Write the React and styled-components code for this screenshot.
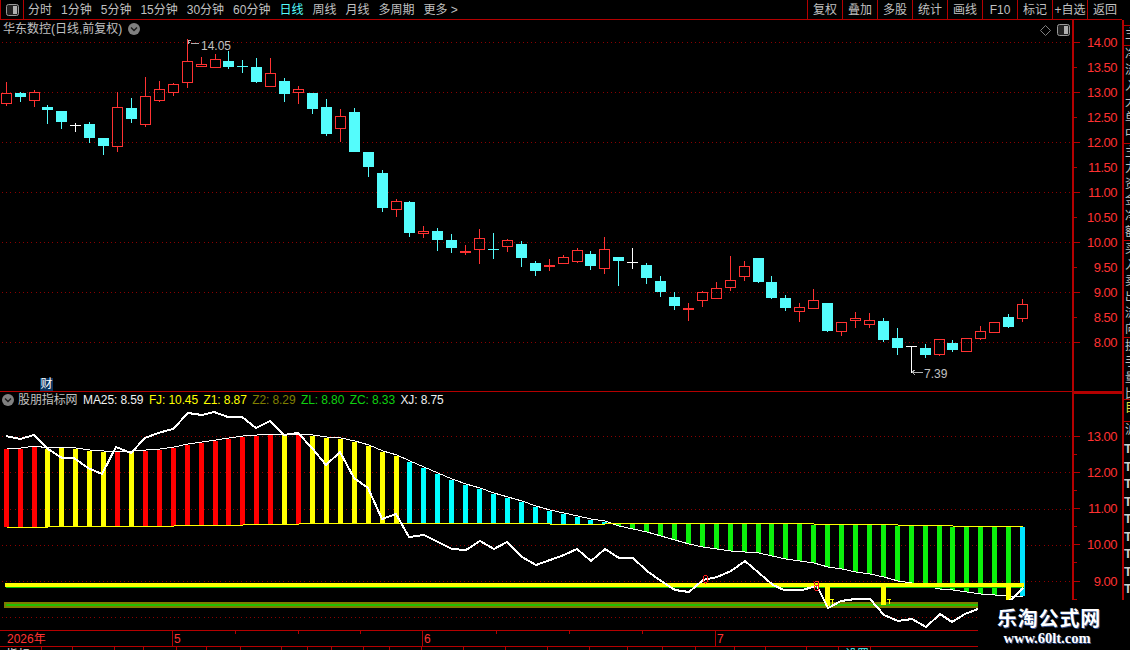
import React from 'react';
import styled, { createGlobalStyle } from 'styled-components';

const RED_LINE = '#b40000';
const RED_TEXT = '#ff3232';
const GREY_TEXT = '#c0c0c0';
const CJK = '"Liberation Sans", "Noto Sans CJK SC", sans-serif';

const GlobalStyle = createGlobalStyle`
  html, body {
    margin: 0;
    background: #000;
  }
`;

const Page = styled.div`
  position: relative;
  width: 1130px;
  height: 650px;
  overflow: hidden;
  background: #000;
  color: ${GREY_TEXT};
  font-family: ${CJK};
  font-size: 12px;
`;

// top toolbar
const TopBar = styled.div`
  display: flex;
  align-items: center;
  height: 19px;
  width: 1122px;
  line-height: 14px;
  border-bottom: 1px solid ${RED_LINE};
`;

const IconBox = styled.div`
  display: flex;
  align-items: center;
  justify-content: center;
  box-sizing: border-box;
  width: 24px;
  height: 19px;
  margin-right: 4px;
  border-left: 1px solid ${RED_LINE};
  border-right: 1px solid ${RED_LINE};
`;

const Periods = styled.div`
  display: flex;
  gap: 9px;
  flex: 1;
`;

const Period = styled.span`
  white-space: nowrap;
  color: ${p => (p.$active ? '#54fcfc' : GREY_TEXT)};
`;

const ToolButton = styled.div`
  display: flex;
  align-items: center;
  justify-content: center;
  box-sizing: border-box;
  width: 35px;
  height: 19px;
  border-left: 1px solid ${RED_LINE};
  white-space: nowrap;
`;

const Workspace = styled.div`
  display: flex;
  height: 630px;
`;

const ChartStack = styled.div`
  display: flex;
  flex-direction: column;
  width: 1122px;
`;

const Pane = styled.div`
  display: flex;
  box-sizing: border-box;
  height: ${p => p.$h}px;
  border-top: ${p => (p.$lower ? `1px solid ${RED_LINE}` : 'none')};
`;

const Plot = styled.div`
  position: relative;
  width: 1072px;
  flex: none;

  svg {
    display: block;
  }
`;

const PaneHeader = styled.div`
  position: absolute;
  top: ${p => p.$top}px;
  left: ${p => p.$left}px;
  display: flex;
  align-items: center;
  gap: ${p => p.$gap}px;
  line-height: 14px;
  white-space: nowrap;
`;

const Legend = styled.span`
  color: ${p => p.$color};
  letter-spacing: -0.1px;
  margin-right: ${p => p.$mr || 0}px;
`;

const CornerIcons = styled.div`
  position: absolute;
  top: 4px;
  right: 2px;
  display: flex;
  align-items: center;
  gap: 6px;
`;

const FinanceBadge = styled.div`
  position: absolute;
  left: 40px;
  bottom: 0;
  width: 13px;
  height: 13px;
  background: #0a3560;
  color: #fff;
  line-height: 13px;
  text-align: center;
`;

const Axis = styled.div`
  box-sizing: border-box;
  width: 50px;
  padding-top: ${p => p.$pad}px;
  border-left: 2px solid ${RED_LINE};
  border-top: ${p => (p.$boxed ? `2px solid ${RED_LINE}` : 'none')};
`;

const AxisRow = styled.div`
  display: flex;
  align-items: center;
  justify-content: space-between;
  height: ${p => p.$h}px;
  padding-right: 5px;
  color: ${RED_TEXT};
  font-size: 13px;
  letter-spacing: -0.5px;
`;

const Tick = styled.i`
  display: block;
  width: ${p => (p.$major ? 6 : 3)}px;
  height: 1px;
  background: ${RED_LINE};
`;

// date axis under the charts
const TimeAxis = styled.div`
  display: flex;
  box-sizing: border-box;
  height: 17px;
  border-top: 1px solid ${RED_LINE};
  border-bottom: 1px solid ${RED_LINE};
  color: ${RED_TEXT};
`;

const MonthCell = styled.div`
  display: flex;
  box-sizing: border-box;
  width: ${p => p.$w}px;
  flex: none;
  line-height: 16px;
  border-left: ${p => (p.$first ? 'none' : `1px solid ${RED_LINE}`)};
  padding-left: ${p => (p.$first ? 7 : 1)}px;
`;

const WeekSlot = styled.div`
  box-sizing: border-box;
  flex: 1;
  height: 3px;
  border-right: ${p => (p.$last ? 'none' : `1px solid ${RED_LINE}`)};
`;

const MonthLabel = styled.span`
  position: absolute;
`;

const BottomTabs = styled.div`
  display: flex;
  height: 3px;
  overflow: hidden;
`;

const BottomTab = styled.div`
  box-sizing: border-box;
  width: ${p => p.$w}px;
  flex: none;
  height: 3px;
  border-right: 1px solid ${RED_LINE};
  padding-left: ${p => p.$pad || 0}px;
  color: ${p => p.$color || '#e0e0e0'};
  line-height: 16px;
  white-space: nowrap;
`;

// clipped side panel along the right edge
const SideStrip = styled.div`
  display: flex;
  flex-direction: column;
  box-sizing: border-box;
  width: 8px;
  height: 580px;
  padding-top: 5px;
  border-left: 2px solid ${RED_LINE};
`;

const StripCell = styled.div`
  box-sizing: border-box;
  height: ${p => p.$h}px;
  width: 6px;
  overflow: hidden;
  border-top: 1px solid ${RED_LINE};
  color: ${p => p.$color || GREY_TEXT};
  line-height: 16px;
  word-break: break-all;
  padding-left: 1px;
`;

const StripMark = styled.div`
  height: 17.5px;
  width: 6px;
  overflow: hidden;
  font-weight: bold;
  font-size: 13px;
  line-height: 17px;
  color: #ccc;
`;

const Watermark = styled.div`
  position: absolute;
  left: 978px;
  top: 600px;
  width: 152px;
  height: 50px;
  background: #000;
  color: #fff;
  text-align: center;
`;

const WatermarkTitle = styled.div`
  margin-top: 5px;
  padding-right: 10px;
  font-family: "Noto Sans CJK SC", sans-serif;
  font-size: 20px;
  line-height: 26px;
  font-weight: 700;
  letter-spacing: 0.8px;
  text-shadow: 1px 1px 0 #36508c;
`;

const WatermarkUrl = styled.div`
  padding-right: 14px;
  font-family: "Liberation Serif", serif;
  font-size: 14.5px;
  line-height: 14px;
  font-weight: 700;
  text-shadow: 1px 1px 0 #36508c;
`;

const LEFT_PERIODS = ['分时', '1分钟', '5分钟', '15分钟', '30分钟', '60分钟', '日线', '周线', '月线', '多周期', '更多 >'];
const TOOLS = ['复权', '叠加', '多股', '统计', '画线', 'F10', '标记', '+自选', '返回'];

// x, kind, high, body top, body bottom, low
const CANDLES = [
  [6, 'r', 82, 93, 104, 106], [20, 'c', 92, 93, 97, 102], [34, 'r', 90, 92, 101, 107],
  [47, 'c', 105, 107, 110, 124], [61, 'c', 111, 111, 122, 129], [75, 'w', 123, 125, 126, 132],
  [89, 'c', 122, 124, 138, 143], [103, 'c', 138, 138, 146, 155], [117, 'r', 92, 107, 147, 152],
  [131, 'c', 98, 108, 119, 123], [145, 'r', 77, 96, 125, 127], [159, 'r', 81, 89, 101, 102],
  [173, 'r', 83, 84, 93, 96], [187, 'r', 39, 61, 83, 88], [201, 'r', 57, 64, 67, 67],
  [215, 'r', 54, 59, 68, 68], [228, 'c', 51, 61, 67, 69], [242, 'c', 60, 66, 67, 73],
  [256, 'c', 58, 67, 82, 83], [270, 'r', 58, 73, 87, 87], [284, 'c', 78, 81, 94, 102],
  [298, 'r', 86, 89, 93, 104], [312, 'c', 93, 93, 109, 114], [326, 'c', 99, 107, 134, 136],
  [340, 'r', 109, 116, 129, 142], [354, 'c', 108, 112, 152, 152], [368, 'c', 152, 152, 167, 177],
  [382, 'c', 170, 173, 208, 212], [396, 'r', 199, 201, 210, 217], [409, 'c', 201, 202, 233, 237],
  [423, 'r', 226, 231, 234, 238], [437, 'c', 228, 231, 240, 251], [451, 'c', 234, 240, 248, 253],
  [465, 'r', 245, 251, 253, 255], [479, 'r', 229, 238, 250, 264], [493, 'c', 233, 249, 250, 259],
  [507, 'r', 239, 240, 247, 252], [521, 'c', 241, 244, 258, 267], [535, 'c', 261, 263, 271, 276],
  [549, 'r', 259, 265, 267, 271], [563, 'r', 255, 257, 264, 264], [577, 'r', 248, 250, 262, 263],
  [590, 'c', 251, 254, 266, 270], [604, 'r', 237, 249, 269, 274], [618, 'c', 257, 257, 261, 286],
  [632, 'w', 248, 262, 263, 269], [646, 'c', 263, 265, 278, 284], [660, 'c', 276, 281, 292, 297],
  [674, 'c', 292, 297, 306, 310], [688, 'r', 303, 308, 310, 321], [702, 'r', 291, 292, 301, 307],
  [716, 'r', 282, 288, 299, 299], [730, 'r', 256, 280, 288, 291], [744, 'r', 261, 266, 277, 281],
  [758, 'c', 258, 258, 282, 283], [771, 'c', 276, 282, 298, 299], [785, 'c', 295, 298, 308, 311],
  [799, 'r', 303, 307, 312, 322], [813, 'r', 289, 300, 309, 309], [827, 'c', 303, 303, 331, 332],
  [841, 'r', 322, 322, 332, 336], [855, 'r', 312, 318, 321, 328], [869, 'r', 313, 320, 325, 328],
  [883, 'c', 318, 321, 340, 342], [897, 'c', 328, 338, 348, 355], [911, 'w', 346, 346, 347, 373],
  [925, 'c', 344, 348, 355, 358], [939, 'r', 339, 339, 355, 356], [952, 'c', 340, 343, 350, 352],
  [966, 'r', 338, 338, 352, 352], [980, 'r', 326, 331, 339, 340], [994, 'r', 322, 322, 333, 333],
  [1008, 'c', 314, 317, 327, 328], [1022, 'r', 299, 304, 319, 322],
];

const FALL_TOPS = [449, 449, 447, 449, 448, 449, 451, 452, 452, 452, 451, 450, 448, 445, 443, 441, 439, 437, 436, 435, 435, 435, 436, 438, 439, 442, 446, 452, 456, 462, 468, 474, 480, 485, 489, 494, 498, 502, 507, 511, 514, 517, 520, 522];
const GREEN_BOTTOMS = [526, 529, 532, 536, 540, 544, 547, 549, 551, 552, 553, 556, 559, 561, 563, 567, 569, 572, 574, 577, 581, 583, 586, 589, 590, 592, 594, 595, 596, 596];

const barColor = i => {
  if (i >= 73) return '#00e4ff';
  if (i >= 44) return '#0cf00c';
  if (i >= 29) return '#00ffff';
  const red = i < 3 || i === 8 || (i >= 10 && i < 20) || i === 21;
  return red ? '#ff0000' : '#ffff00';
};
const lowerEdge = x => (x < 50 ? 527 : x < 180 ? 526 : x < 250 ? 525 : x < 300 ? 524 : x < 543 ? 523 : 524);
const upperEdge = x => (x < 808 ? 524 : x < 890 ? 525 : x < 945 ? 526 : 527);

const BARS = CANDLES.map(([x], i) => (i < 44
  ? { x, top: FALL_TOPS[i], bottom: lowerEdge(x), color: barColor(i) }
  : { x, top: upperEdge(x), bottom: GREEN_BOTTOMS[i - 44], color: barColor(i) }));

const XJ_LINE = '6,436 20,439 34,435 48,449 62,458 74,458 88,468 102,474 116,447 131,453 145,438 158,433 173,429 188,413 202,415 214,412 228,417 242,417 256,428 270,421 284,435 298,433 312,448 326,465 340,452 354,478 368,488 382,519 396,514 409,537 424,535 438,542 452,549 466,550 480,541 494,549 507,542 522,557 536,565 550,560 564,555 577,549 591,561 605,549 619,558 633,558 647,571 661,581 675,590 689,592 703,580 717,577 731,571 745,561 759,573 773,585 784,590 802,590 817,586 828,608 841,601 855,599 870,599 884,615 898,621 912,619 926,627 940,614 952,622 965,614 978,609 995,605 1011,600 1023,588';

const WHITE_EDGE = BARS.map((b, i) => `${b.x + 1},${i < 44 ? b.top - 1 : b.bottom}`).join(' ');
const YELLOW_EDGE = BARS.map((b, i) => `${b.x + 1},${i < 44 ? b.bottom : b.top - 1}`).join(' ');

const MAIN_GRID = [42, 92, 142, 192, 242, 292, 342];
const LOWER_GRID = [436, 472, 509, 545, 581, 617];

const CANDLE_COLORS = { r: '#ff3232', c: '#54fcfc', w: '#ffffff' };

const Candle = ({ x, kind, high, top, bottom, low }) => {
  const color = CANDLE_COLORS[kind];
  if (bottom - top <= 1) {
    return (
      <g fill={color}>
        <rect x={x} y={high} width={1} height={low - high} />
        <rect x={x - 5} y={top} width={11} height={1} />
      </g>
    );
  }
  return (
    <g>
      <rect x={x} y={high} width={1} height={top - high} fill={color} />
      <rect x={x} y={bottom} width={1} height={low - bottom} fill={color} />
      {kind === 'r'
        ? <rect x={x - 4.5} y={top + 0.5} width={10} height={bottom - top - 1} fill="none" stroke={color} />
        : <rect x={x - 5} y={top} width={11} height={bottom - top} fill={color} />}
    </g>
  );
};

const GridLines = ({ rows }) => rows.map(y => (
  <line key={y} x1={2} x2={1072} y1={y + 0.5} y2={y + 0.5} stroke="#8c0000" strokeDasharray="1 3.2" />
));

const CandleChart = () => (
  <svg width={1072} height={371} viewBox="0 20 1072 371" shapeRendering="crispEdges">
    <GridLines rows={MAIN_GRID} />
    {CANDLES.map(([x, kind, high, top, bottom, low]) => (
      <Candle key={x} x={x} kind={kind} high={high} top={top} bottom={bottom} low={low} />
    ))}
    <path d="M188 40h3M188 40v4M188 42h2M191 43l3 1l3-1l2 1" stroke="#b0b0b0" fill="none" />
    <text x={201} y={50} fill={GREY_TEXT} fontSize={12} fontFamily="Liberation Sans">14.05</text>
    <path d="M912 372h11M912 372l3-2M912 372l3 3" stroke="#b0b0b0" fill="none" />
    <text x={924} y={378} fill={GREY_TEXT} fontSize={12} fontFamily="Liberation Sans">7.39</text>
  </svg>
);

const IndicatorChart = () => (
  <svg width={1072} height={238} viewBox="0 392 1072 238" shapeRendering="crispEdges">
    <GridLines rows={LOWER_GRID} />
    {BARS.map(b => (
      <rect key={b.x} x={b.x - 2} y={b.top} width={5} height={b.bottom - b.top} fill={b.color} />
    ))}
    <polyline points={WHITE_EDGE} fill="none" stroke="#fff" />
    <polyline points={YELLOW_EDGE} fill="none" stroke="#ffff00" />
    <rect x={6} y={587} width={1018} height={1} fill="#00c000" />
    <rect x={5} y={583} width={1019} height={4} fill="#ffff00" />
    <rect x={4} y={602} width={974} height={6} fill="#7c7c00" />
    <rect x={6} y={604} width={972} height={2} fill="#20c000" />
    <rect x={825} y={587} width={5} height={19} fill="#ffff00" />
    <rect x={881} y={587} width={5} height={18} fill="#ffff00" />
    <rect x={1006} y={587} width={5} height={13} fill="#ffff00" />
    <path d="M830 599h4M832 599v5M887 599h4M889 599v5" stroke="#ffff00" fill="none" />
    <polyline points={XJ_LINE} fill="none" stroke="#fff" strokeWidth={2} />
    <ellipse cx={705.5} cy={579} rx={2} ry={4} fill="none" stroke="#ff2020" />
    <ellipse cx={816.5} cy={583.5} rx={2} ry={2.5} fill="none" stroke="#ff2020" />
    <ellipse cx={816.5} cy={588} rx={2} ry={2.5} fill="none" stroke="#ff2020" />
  </svg>
);

const PanelIcon = () => (
  <svg width={13} height={12} viewBox="0 0 13 12">
    <rect x={0.5} y={0.5} width={12} height={11} rx={2} fill="#222" stroke="#9a9a9a" />
    <rect x={7} y={2} width={4} height={8} fill="#b0b0b0" />
  </svg>
);

const Chevron = () => (
  <svg width={12} height={12} viewBox="0 0 12 12">
    <circle cx={6} cy={6} r={6} fill="#808080" />
    <path d="M3 4.5l3 3l3-3" fill="none" stroke="#1a1a1a" strokeWidth={1.4} />
  </svg>
);

const Diamond = () => (
  <svg width={11} height={11} viewBox="0 0 11 11">
    <path d="M5.5 0.5l5 5l-5 5l-5-5z" fill="none" stroke="#808080" />
  </svg>
);

const PriceAxis = () => (
  <Axis $pad={9.5}>
    {['14.00', '13.50', '13.00', '12.50', '12.00', '11.50', '11.00', '10.50', '10.00', '9.50', '9.00', '8.50', '8.00'].map((label, i) => (
      <AxisRow key={label} $h={25}>
        <Tick $major={i % 2 === 0} />
        {label}
      </AxisRow>
    ))}
  </Axis>
);

const IndicatorAxis = () => (
  <Axis $pad={33} $boxed>
    {['13.00', '', '12.00', '', '11.00', '', '10.00', '', '9.00', ''].map((label, i) => (
      <AxisRow key={i} $h={18.125}>
        <Tick $major={i % 2 === 0} />
        {label}
      </AxisRow>
    ))}
  </Axis>
);

const Weeks = ({ count }) => Array.from({ length: count }, (_, i) => (
  <WeekSlot key={i} $last={i === count - 1} />
));

const TAB_WIDTHS = [42, 31, 42, 29, 33, 30, 34, 41, 26, 24, 32, 26, 32, 42, 42, 42, 42, 38, 35, 33, 39, 31, 41, 32, 32];

const strip = [
  { h: 20, text: '主' },
  { h: 98, text: '净流入大单中单小单' },
  { h: 97, text: '主力资金净额比例' },
  { h: 97, text: '买入卖出流向对比' },
  { h: 62, text: '换手量比' },
  { h: 22, text: '目', color: '#e0e040' },
  { h: 19, text: '沪' },
];

export default function App() {
  return (
    <Page>
      <GlobalStyle />
      <TopBar>
        <IconBox><PanelIcon /></IconBox>
        <Periods>
          {LEFT_PERIODS.map(label => <Period key={label} $active={label === '日线'}>{label}</Period>)}
        </Periods>
        {TOOLS.map(label => <ToolButton key={label}>{label}</ToolButton>)}
      </TopBar>
      <Workspace>
        <ChartStack>
          <Pane $h={371}>
            <Plot>
              <CandleChart />
              <PaneHeader $top={2} $left={3} $gap={6}>
                华东数控(日线,前复权)
                <Chevron />
              </PaneHeader>
              <CornerIcons><Diamond /><PanelIcon /></CornerIcons>
              <FinanceBadge>财</FinanceBadge>
            </Plot>
            <PriceAxis />
          </Pane>
          <Pane $h={239} $lower>
            <Plot>
              <IndicatorChart />
              <PaneHeader $top={1} $left={2} $gap={4}>
                <Chevron />
                <Legend $color={GREY_TEXT} $mr={1.5}>股朋指标网</Legend>
                <Legend $color="#f0f0f0" $mr={1.5}>MA25: 8.59</Legend>
                <Legend $color="#ffff00" $mr={1.5}>FJ: 10.45</Legend>
                <Legend $color="#ffff00" $mr={1.5}>Z1: 8.87</Legend>
                <Legend $color="#808000" $mr={1.5}>Z2: 8.29</Legend>
                <Legend $color="#10d010" $mr={1.5}>ZL: 8.80</Legend>
                <Legend $color="#10d010" $mr={1.5}>ZC: 8.33</Legend>
                <Legend $color="#f0f0f0">XJ: 8.75</Legend>
              </PaneHeader>
            </Plot>
            <IndicatorAxis />
          </Pane>
          <TimeAxis>
            <MonthCell $w={172} $first><MonthLabel>2026年</MonthLabel></MonthCell>
            <MonthCell $w={250}><MonthLabel>5</MonthLabel><Weeks count={4} /></MonthCell>
            <MonthCell $w={293}><MonthLabel>6</MonthLabel><Weeks count={4} /></MonthCell>
            <MonthCell $w={263}><MonthLabel>7</MonthLabel></MonthCell>
          </TimeAxis>
          <BottomTabs>
            {TAB_WIDTHS.map((w, i) => (
              <BottomTab key={i} $w={w} $pad={i === 0 ? 6 : 6} $color={i === 24 ? '#54fcfc' : undefined}>
                {i === 0 ? '指标' : i === 24 ? '设置' : ''}
              </BottomTab>
            ))}
          </BottomTabs>
        </ChartStack>
        <SideStrip>
          {strip.map(cell => (
            <StripCell key={cell.text} $h={cell.h} $color={cell.color}>{cell.text}</StripCell>
          ))}
          {Array.from({ length: 9 }, (_, i) => <StripMark key={i}>T</StripMark>)}
        </SideStrip>
      </Workspace>
      <Watermark>
        <WatermarkTitle>乐淘公式网</WatermarkTitle>
        <WatermarkUrl>www.60lt.com</WatermarkUrl>
      </Watermark>
    </Page>
  );
}
